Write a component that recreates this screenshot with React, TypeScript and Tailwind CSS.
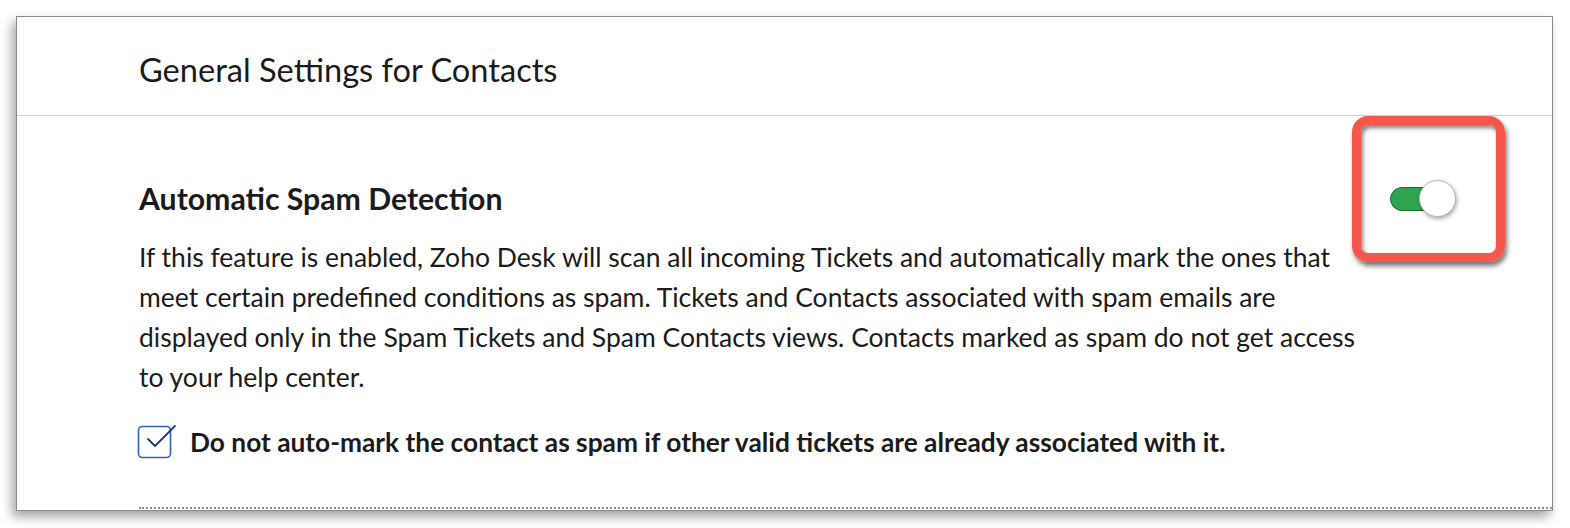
import React from 'react'

const lato = { fontFamily: 'Lato, "Open Sans", sans-serif' }

function Toggle() {
  return (
    <div className="relative h-[37px] w-[66px]">
      <div className="absolute left-0 top-[7px] h-[24px] w-[52px] rounded-full border border-[#1d6b31] bg-[#2ea44f]" />
      <div className="absolute right-0 top-0 h-[37px] w-[37px] rounded-full border border-[#b5b5b5] bg-white shadow-[1px_2px_4px_rgba(0,0,0,0.35)]" />
    </div>
  )
}

function CheckBox() {
  return (
    <svg width="40" height="36" viewBox="0 0 40 36" className="shrink-0">
      <rect x="1.5" y="3.5" width="32" height="31" rx="4" fill="none" stroke="#2f63c0" strokeWidth="1.6" />
      <path d="M11 16 L18 23 L38 3" fill="none" stroke="#1f3d7a" strokeWidth="1.8" strokeLinecap="round" strokeLinejoin="round" />
    </svg>
  )
}

export default function App() {
  return (
    <div className="h-[528px] w-[1570px] bg-white pl-[16px] pt-[16px]" style={lato}>
      <div className="flex h-[495px] w-[1537px] flex-col border border-[#8a8a8a] bg-white shadow-[-4px_6px_10px_rgba(0,0,0,0.35)]">
        {/* Header */}
        <div className="flex h-[99px] items-center border-b border-[#cfcfcf] pl-[122px]">
          <h2 className="pt-[8px] text-[32.6px] font-normal text-[#1b1b1b]">General Settings for Contacts</h2>
        </div>

        {/* Body */}
        <div className="flex flex-1 flex-col pl-[122px] pr-[96px] pt-[62px]">
          <div className="flex items-center justify-between">
            <h3 className="text-[30.2px] font-bold leading-[40px] text-[#1b1b1b]">Automatic Spam Detection</h3>
            <div className="relative">
              <Toggle />
              <div className="pointer-events-none absolute -left-[38px] -top-[64px] h-[146px] w-[153px] rounded-[16px] border-[9px] border-[#f4574c] shadow-[2px_4px_5px_rgba(0,0,0,0.55),inset_2px_3px_4px_rgba(0,0,0,0.5)]" />
            </div>
          </div>
          <p className="mt-[19px] max-w-[1235px] text-[26.5px] leading-[40px] text-[#1b1b1b]">
            If this feature is enabled, Zoho Desk will scan all incoming Tickets and automatically mark the ones that meet certain predefined conditions as spam. Tickets and Contacts associated with spam emails are displayed only in the Spam Tickets and Spam Contacts views. Contacts marked as spam do not get access to your help center.
          </p>
          <div className="mt-[22px] flex items-center gap-[13px] -ml-[2px]">
            <CheckBox />
            <span className="pt-[4px] text-[26.3px] font-bold text-[#1b1b1b]">
              Do not auto-mark the contact as spam if other valid tickets are already associated with it.
            </span>
          </div>
          <div className="mt-auto mb-[1px] -mr-[96px] border-b-2 border-dotted border-[#8a8a8a]" />
        </div>
      </div>
    </div>
  )
}
